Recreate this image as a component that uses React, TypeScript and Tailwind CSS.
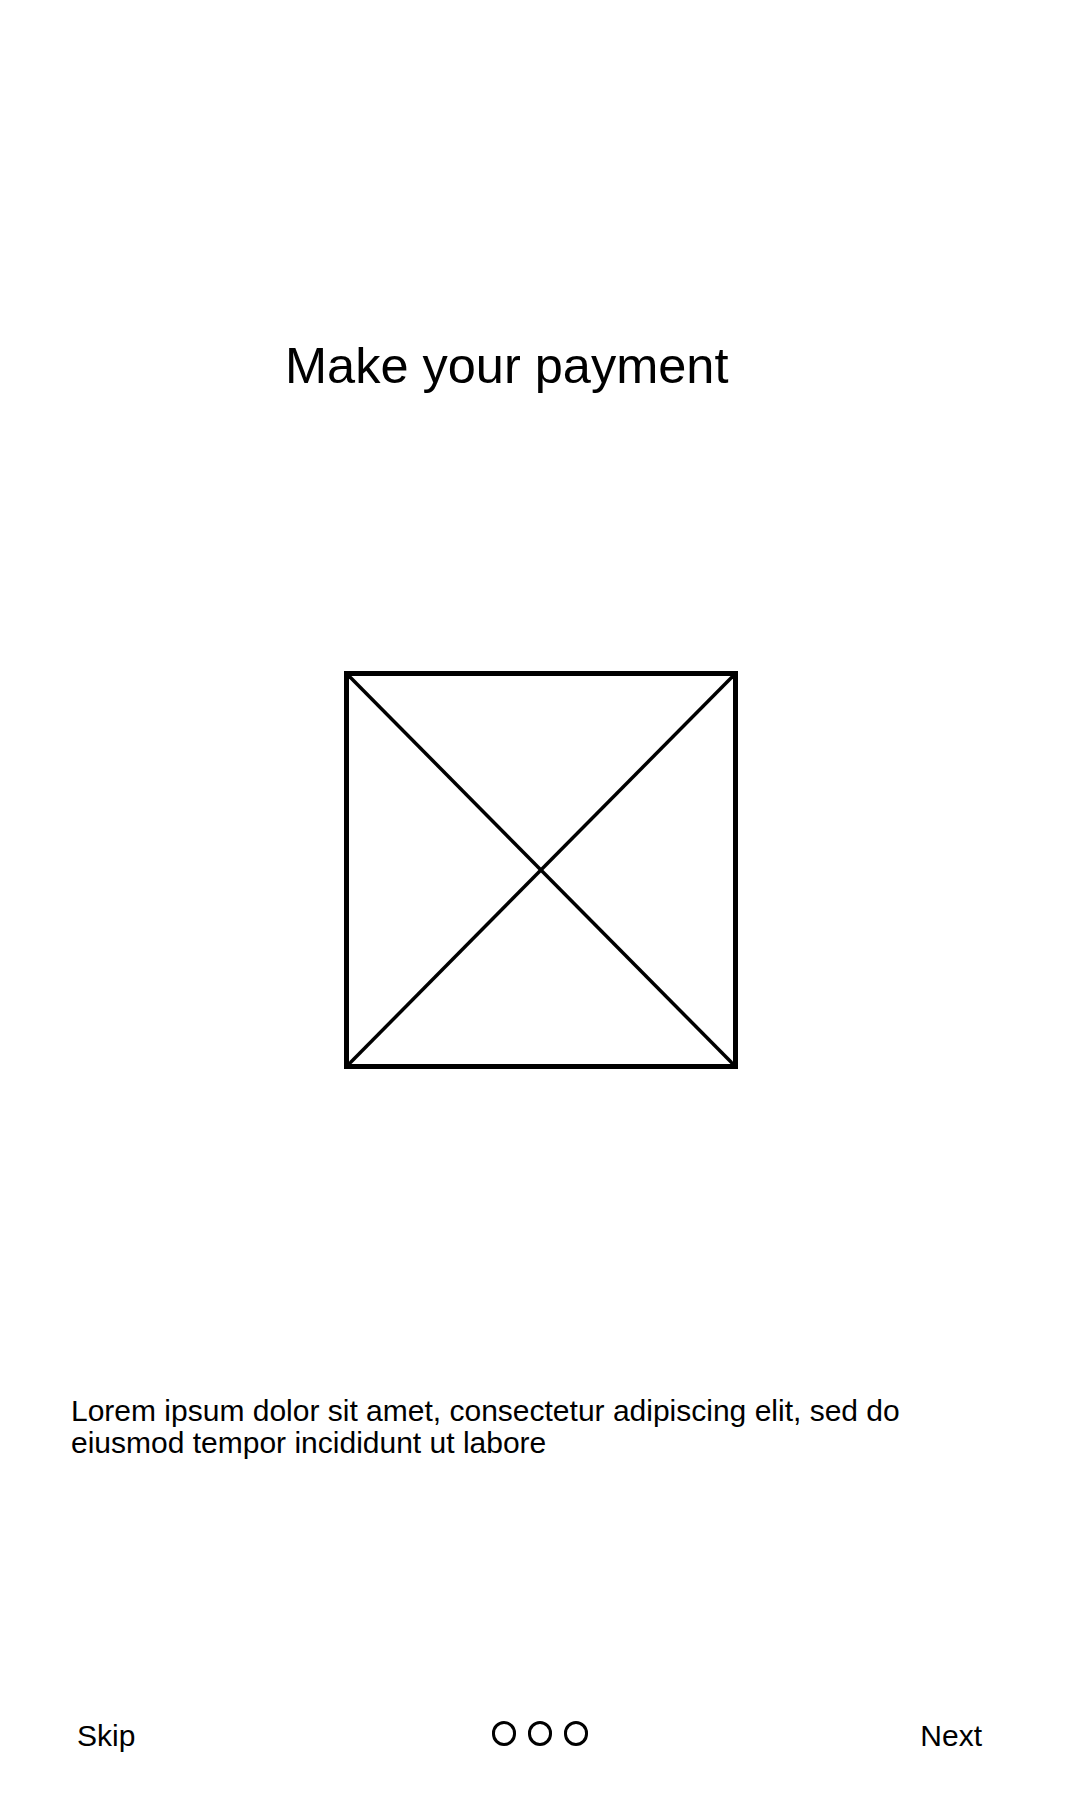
const Dot = () => (
    <span className="block w-[24px] h-[25px] rounded-full border-[3px] border-black" />
)

const App = () => {
    return (
      <div className="w-[1080px] h-[1800px] bg-white text-black font-['Liberation_Sans',Arial,sans-serif] flex flex-col">
          <h1 className="pt-[337px] pl-[285px] text-[50.5px] leading-[58px] font-normal">
              Make your payment
          </h1>

          {/* image placeholder */}
          <div className="mt-[276px] ml-[344px] w-[394px] h-[398px] border-[5px] border-black">
              <svg viewBox="0 0 100 100" preserveAspectRatio="none" className="w-full h-full block">
                  <line x1="0" y1="0" x2="100" y2="100" stroke="black" strokeWidth="3.5" vectorEffect="non-scaling-stroke" />
                  <line x1="100" y1="0" x2="0" y2="100" stroke="black" strokeWidth="3.5" vectorEffect="non-scaling-stroke" />
              </svg>
          </div>

          <p className="mt-[326px] px-[71px] text-[30px] leading-[32px]">
              Lorem ipsum dolor sit amet, consectetur adipiscing elit, sed do eiusmod tempor incididunt ut labore
          </p>

          <div className="mt-[261px] grid grid-cols-[1fr_auto_1fr] items-start text-[30px] leading-[32px]">
              <div className="pl-[77px]">Skip</div>
              <div className="flex gap-[12px] pt-px">
                  <Dot />
                  <Dot />
                  <Dot />
              </div>
              <div className="justify-self-end pr-[98px]">Next</div>
          </div>
      </div>
    )
}

export default App
